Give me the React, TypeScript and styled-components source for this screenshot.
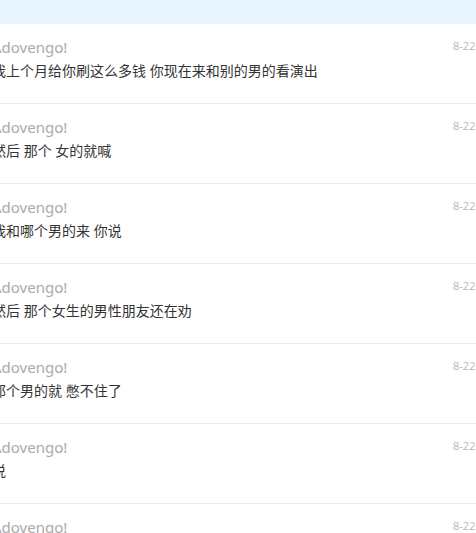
import styled, { createGlobalStyle } from "styled-components";

const comments = [
  { name: "Adovengo!", text: "我上个月给你刷这么多钱 你现在来和别的男的看演出", time: "8-22 21:30" },
  { name: "Adovengo!", text: "然后 那个 女的就喊", time: "8-22 21:30" },
  { name: "Adovengo!", text: "我和哪个男的来 你说", time: "8-22 21:30" },
  { name: "Adovengo!", text: "然后 那个女生的男性朋友还在劝", time: "8-22 21:30" },
  { name: "Adovengo!", text: "那个男的就 憋不住了", time: "8-22 21:30" },
  { name: "Adovengo!", text: "说", time: "8-22 21:30" },
  { name: "Adovengo!", text: "", time: "8-22 21:30" },
];

export default function App() {
  return (
    <>
      <GlobalStyle />
      <Page>
        <TopBar />
        <List>
          {comments.map((c, i) => (
            <Row key={i}>
              <Main>
                <Name>{c.name}</Name>
                <Text>{c.text}</Text>
              </Main>
              <Time>{c.time}</Time>
            </Row>
          ))}
        </List>
      </Page>
    </>
  );
}

const GlobalStyle = createGlobalStyle`
  html, body {
    margin: 0;
    padding: 0;
    background: #fff;
    overflow: hidden;
  }
  body {
    font-family: "Noto Sans", "Noto Sans CJK SC", sans-serif;
  }
`;

const Page = styled.div`
  width: 476px;
  height: 533px;
  overflow: hidden;
`;

const TopBar = styled.div`
  height: 23px;
  background: #e8f4fe;
  border-bottom: 1px solid #eef4f8;
`;

const List = styled.div`
  display: flex;
  flex-direction: column;
  margin-left: -8px;
  width: 540px;
`;

const Row = styled.div`
  display: flex;
  justify-content: space-between;
  align-items: flex-start;
  height: 79px;
  border-bottom: 1px solid #ececec;
  box-sizing: content-box;
`;

const Main = styled.div`
  display: flex;
  flex-direction: column;
  padding-top: 13px;
  gap: 3px;
`;

const Name = styled.div`
  font-size: 15px;
  line-height: 21px;
  color: #aaa;
`;

const Text = styled.div`
  font-size: 14px;
  line-height: 20px;
  color: #333;
`;

const Time = styled.div`
  margin-top: 14px;
  width: 79px;
  font-size: 11px;
  line-height: 16px;
  color: #bbb;
  white-space: nowrap;
`;
